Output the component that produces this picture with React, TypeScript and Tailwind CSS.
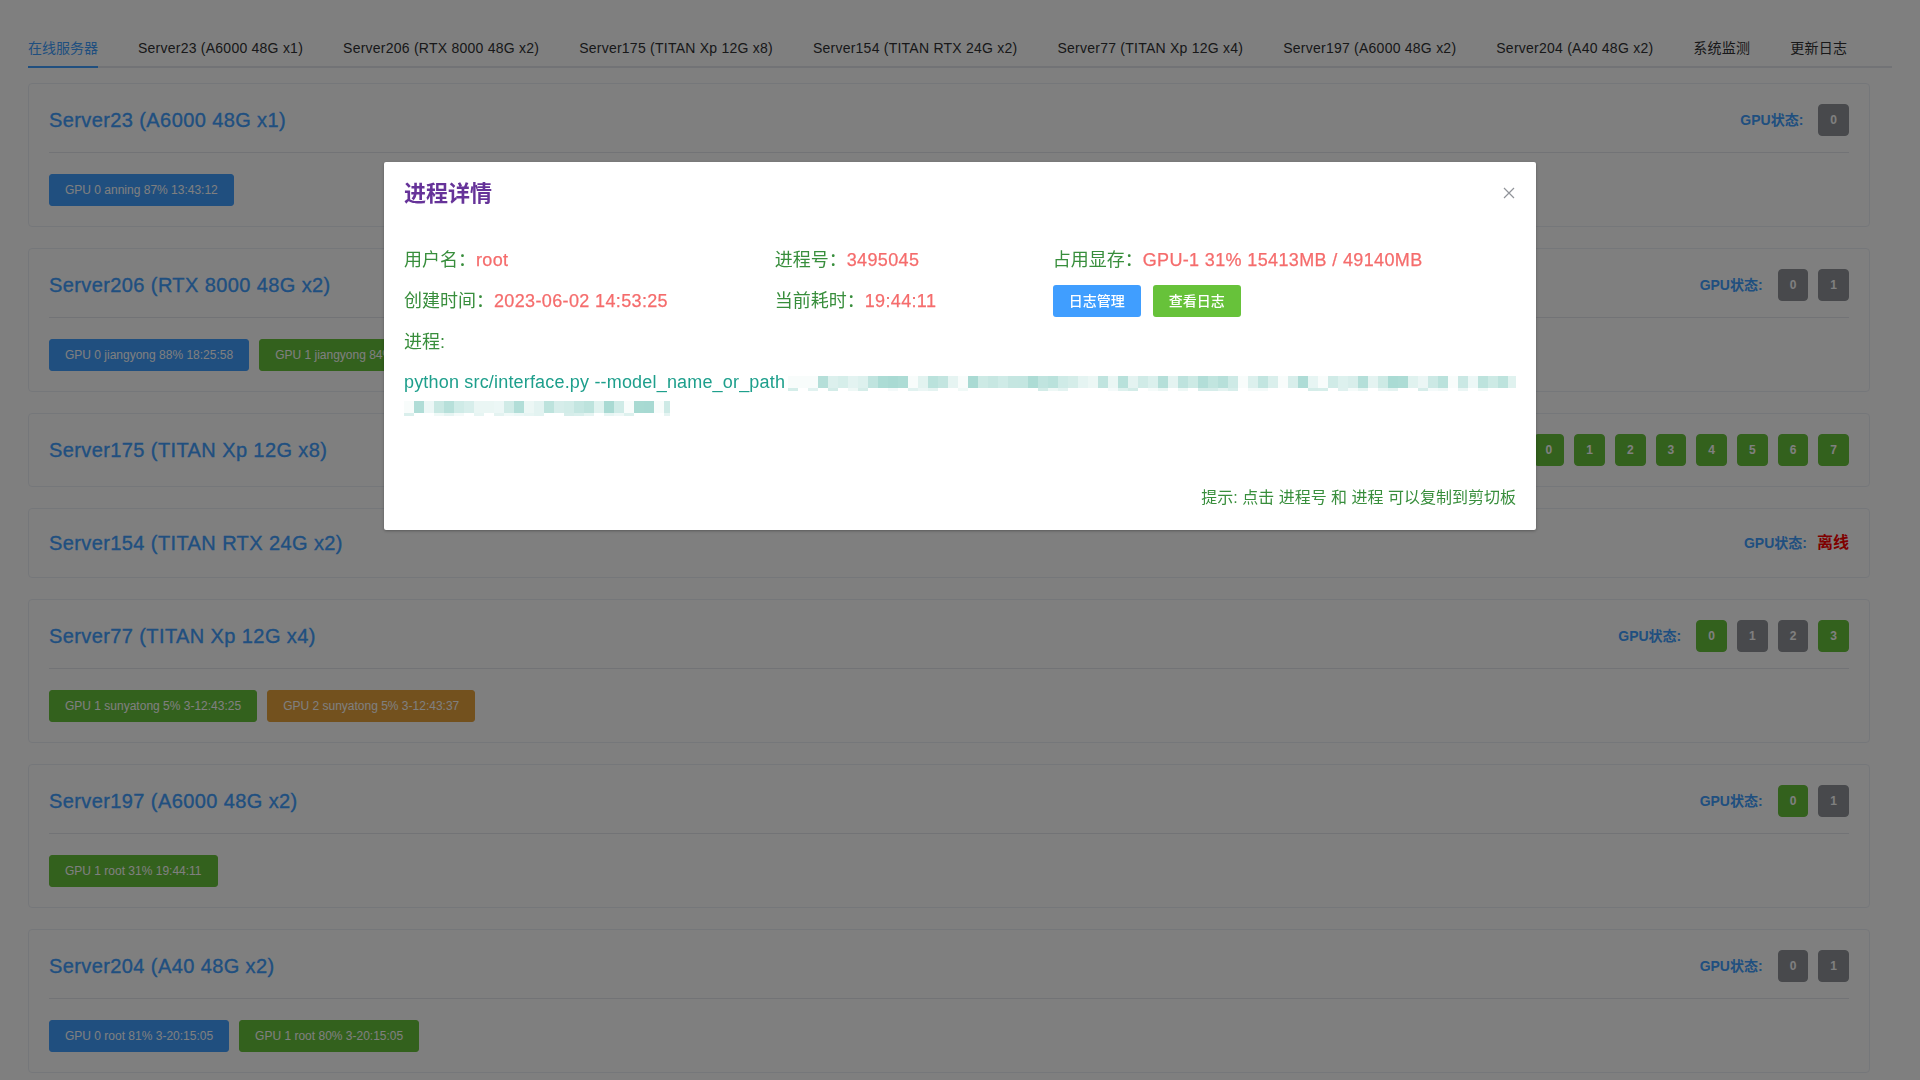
import React from "react";

type Gpu = "g" | "n";
type BadgeColor = "blue" | "green" | "orange";
interface Server {
  name: string;
  gpus?: Gpu[];
  offline?: boolean;
  badges: { text: string; color: BadgeColor }[];
}

const servers: Server[] = [
  { name: "Server23 (A6000 48G x1)", gpus: ["n"], badges: [{ text: "GPU 0 anning 87% 13:43:12", color: "blue" }] },
  {
    name: "Server206 (RTX 8000 48G x2)",
    gpus: ["n", "n"],
    badges: [
      { text: "GPU 0 jiangyong 88% 18:25:58", color: "blue" },
      { text: "GPU 1 jiangyong 84% 18:25:58", color: "green" },
    ],
  },
  { name: "Server175 (TITAN Xp 12G x8)", gpus: ["g", "g", "g", "g", "g", "g", "g", "g"], badges: [] },
  { name: "Server154 (TITAN RTX 24G x2)", offline: true, badges: [] },
  {
    name: "Server77 (TITAN Xp 12G x4)",
    gpus: ["g", "n", "n", "g"],
    badges: [
      { text: "GPU 1 sunyatong 5% 3-12:43:25", color: "green" },
      { text: "GPU 2 sunyatong 5% 3-12:43:37", color: "orange" },
    ],
  },
  { name: "Server197 (A6000 48G x2)", gpus: ["g", "n"], badges: [{ text: "GPU 1 root 31% 19:44:11", color: "green" }] },
  {
    name: "Server204 (A40 48G x2)",
    gpus: ["n", "n"],
    badges: [
      { text: "GPU 0 root 81% 3-20:15:05", color: "blue" },
      { text: "GPU 1 root 80% 3-20:15:05", color: "green" },
    ],
  },
];

const badgeClass: Record<BadgeColor, string> = {
  blue: "bg-[#409EFF] border-[#409EFF]",
  green: "bg-[#67C23A] border-[#67C23A]",
  orange: "bg-[#E6A23C] border-[#E6A23C]",
};

const tabs = [
  "在线服务器",
  "Server23 (A6000 48G x1)",
  "Server206 (RTX 8000 48G x2)",
  "Server175 (TITAN Xp 12G x8)",
  "Server154 (TITAN RTX 24G x2)",
  "Server77 (TITAN Xp 12G x4)",
  "Server197 (A6000 48G x2)",
  "Server204 (A40 48G x2)",
  "系统监测",
  "更新日志",
];

function Mosaic({ width, seed }: { width: number; seed: number }) {
  let s = seed;
  const rnd = () => {
    s = (s * 16807) % 2147483647;
    return s / 2147483647;
  };
  const cells: React.ReactNode[] = [];
  const n = Math.ceil(width / 10);
  for (let i = 0; i < n; i++) {
    const a = rnd();
    const op = a < 0.12 ? 0.03 : 0.07 + rnd() * 0.33;
    cells.push(<rect key={"a" + i} x={i * 10} y={1} width={10} height={12} fill="#1e9f8c" fillOpacity={op} />);
    const b = rnd();
    if (b > 0.55) {
      cells.push(
        <rect key={"b" + i} x={i * 10} y={13} width={10} height={3} fill="#1e9f8c" fillOpacity={0.04 + rnd() * 0.16} />
      );
    }
  }
  return (
    <svg width={width} height={16} viewBox={`0 0 ${width} 16`} className="block shrink-0">
      {cells}
    </svg>
  );
}

function Card({ s }: { s: Server }) {
  return (
    <div className="rounded border border-[#EBEEF5] bg-white p-5">
      <div className="flex items-center justify-between">
        <div className="text-[20px] leading-7 tracking-[0.02em] text-[#409EFF] [-webkit-text-stroke:0.35px_#409EFF]">
          {s.name}
        </div>
        <div className="flex items-center">
          <span className="text-[14px] font-bold text-[#409EFF]">GPU状态:</span>
          {s.offline ? (
            <span className="ml-[10px] text-[16px] font-bold text-[#ff0000]">离线</span>
          ) : (
            <div className="ml-[15px] flex gap-[10px]">
              {s.gpus!.map((g, i) => (
                <div
                  key={i}
                  className={
                    "flex h-8 items-center justify-center rounded-[4px] border px-[11px] text-[12px] font-bold text-white " +
                    (g === "g" ? "border-[#67C23A] bg-[#67C23A]" : "border-[#909399] bg-[#909399]")
                  }
                >
                  {i}
                </div>
              ))}
            </div>
          )}
        </div>
      </div>
      {s.badges.length > 0 && (
        <>
          <div className="mt-4 h-px bg-[#E4E7ED]" />
          <div className="mt-[21px] flex gap-[10px]">
            {s.badges.map((b, i) => (
              <div
                key={i}
                className={
                  "flex h-8 items-center rounded-[3px] border px-[15px] text-[12px] text-white " + badgeClass[b.color]
                }
              >
                {b.text}
              </div>
            ))}
          </div>
        </>
      )}
    </div>
  );
}

export default function App() {
  return (
    <div className="relative min-h-screen bg-white px-[28px] pt-[28px] pb-10 font-['Liberation_Sans','Noto_Sans_CJK_SC',sans-serif]">
      <div className="flex h-10 shadow-[inset_0_-2px_0_#E4E7ED]">
        {tabs.map((t, i) => (
          <div
            key={i}
            className={
              "flex h-10 items-center text-[14px] " +
              (i === 0 ? "pr-5 text-[#409EFF]" : i === tabs.length - 1 ? "pl-5 text-[#303133]" : "px-5 text-[#303133]")
            }
          >
            <span
              className={
                i === 0
                  ? "flex h-10 items-center shadow-[inset_0_-2px_0_#409EFF]"
                  : "tracking-[0.24px]"
              }
            >
              {t}
            </span>
          </div>
        ))}
      </div>

      <div className="mt-[15px] mr-[22px] flex flex-col gap-[21px]">
        {servers.map((s) => (
          <Card key={s.name} s={s} />
        ))}
      </div>

      <div className="fixed inset-0 bg-black/50" />

      <div className="fixed inset-0 flex items-start justify-center pt-[162px]">
        <div className="relative w-[60%] rounded-[2px] bg-white shadow-[0_1px_3px_rgba(0,0,0,0.3)]">
          <div className="px-5 pt-5 pb-2.5">
            <div className="text-[22px] leading-6 font-semibold text-[#663399]">进程详情</div>
          </div>
          <button className="absolute top-[25px] right-[21px] block">
            <svg width="12" height="12" viewBox="0 0 12 12" className="block">
              <path d="M1 1 L11 11 M11 1 L1 11" stroke="#909399" strokeWidth="1.2" fill="none" />
            </svg>
          </button>

          <div className="px-5 pt-[30px] pb-[55px] text-[18px]">
            <div className="flex h-7 items-center leading-7">
              <div className="w-1/3">
                <span className="text-[#388e3c]">用户名：</span>
                <span className="tracking-[0.02em] text-[#f56c6c] [-webkit-text-stroke:0.25px_#f56c6c]">root</span>
              </div>
              <div className="w-1/4">
                <span className="text-[#388e3c]">进程号：</span>
                <span className="tracking-[0.02em] text-[#f56c6c] [-webkit-text-stroke:0.25px_#f56c6c]">3495045</span>
              </div>
              <div className="flex-1">
                <span className="text-[#388e3c]">占用显存：</span>
                <span className="tracking-[0.02em] text-[#f56c6c] [-webkit-text-stroke:0.25px_#f56c6c]">
                  GPU-1 31% 15413MB / 49140MB
                </span>
              </div>
            </div>

            <div className="mt-[11px] flex h-8 items-center leading-7">
              <div className="w-1/3">
                <span className="text-[#388e3c]">创建时间：</span>
                <span className="tracking-[0.02em] text-[#f56c6c] [-webkit-text-stroke:0.25px_#f56c6c]">
                  2023-06-02 14:53:25
                </span>
              </div>
              <div className="w-1/4">
                <span className="text-[#388e3c]">当前耗时：</span>
                <span className="tracking-[0.02em] text-[#f56c6c] [-webkit-text-stroke:0.25px_#f56c6c]">19:44:11</span>
              </div>
              <div className="flex flex-1 items-center gap-3">
                <button className="flex h-8 items-center rounded-[3px] bg-[#409EFF] px-4 text-[14px] font-medium text-white">
                  日志管理
                </button>
                <button className="flex h-8 items-center rounded-[3px] bg-[#67C23A] px-4 text-[14px] font-medium text-white">
                  查看日志
                </button>
              </div>
            </div>

            <div className="mt-[11px] h-7 leading-7 text-[#388e3c]">进程:</div>

            <div className="mt-[13px] text-[#1e9f8c]">
              <div className="flex h-[26px] items-center whitespace-nowrap">
                <span className="shrink-0 leading-[26px] tracking-[0.01em]">
                  python src/interface.py --model_name_or_path
                </span>
                <span className="ml-[3px] mt-[2px] shrink-0">
                  <Mosaic width={728} seed={12345} />
                </span>
              </div>
              <div className="flex h-[26px] items-center">
                <Mosaic width={266} seed={987} />
              </div>
            </div>
          </div>

          <div className="px-5 pt-2.5 pb-5 text-right text-[16px] leading-6 text-[#388e3c]">
            提示: 点击 进程号 和 进程 可以复制到剪切板
          </div>
        </div>
      </div>
    </div>
  );
}
